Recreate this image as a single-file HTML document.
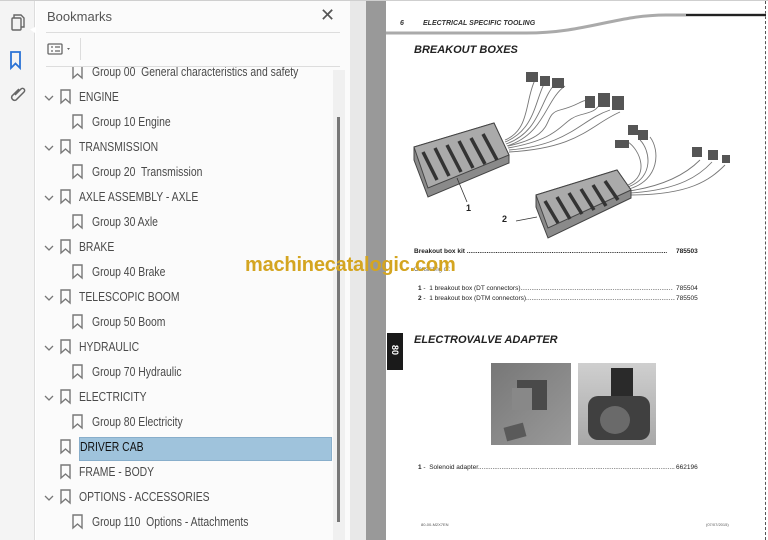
<!DOCTYPE html>
<html><head><meta charset="utf-8"><style>
*{margin:0;padding:0;box-sizing:border-box}
body{width:768px;height:540px;overflow:hidden;position:relative;background:#fff;font-family:"Liberation Sans",sans-serif}
.abs{position:absolute}
.it{position:absolute;font-size:13px;color:#4a4a4a;white-space:nowrap;line-height:14px;transform:scaleX(0.8);transform-origin:0 0}
.doc{position:absolute;font-family:"Liberation Sans",sans-serif;color:#222;white-space:nowrap}
</style></head><body>
<div class="abs" style="left:0;top:0;width:768px;height:1px;background:#cfcfcf"></div>
<div class="abs" style="left:0;top:1px;width:35px;height:539px;background:#f4f4f4;border-right:1px solid #ddd"></div>
<svg class="abs" style="left:0;top:0" width="36" height="110">
 <g fill="none" stroke="#666" stroke-width="1.4">
  <rect x="12" y="18" width="9" height="12" rx="1"/>
  <path d="M14 18 V15 H21 L24 18 V27 H21"/>
 </g>
 <path d="M11 52 H20 V68 L15.5 63.5 L11 68 Z" fill="none" stroke="#2a72d5" stroke-width="1.8"/>
 <path d="M30 29.5 L35 27 L35 33 Z" fill="#fff"/>
 <path d="M19 89 L12 96 a3 3 0 0 0 4 4 L24 92 a2 2 0 0 0 -3 -3 L15 95" fill="none" stroke="#666" stroke-width="1.5"/>
</svg>
<div class="abs" style="left:36px;top:1px;width:314px;height:539px;background:#fbfbfb"></div>
<div class="abs" style="left:47px;top:9px;font-size:13px;color:#555">Bookmarks</div>
<div class="abs" style="left:320px;top:5px;font-size:18px;color:#555">✕</div>
<div class="abs" style="left:46px;top:32px;width:294px;height:1px;background:#ddd"></div>
<svg class="abs" style="left:46px;top:40px" width="40" height="20"><rect x="2" y="4" width="14" height="10" rx="1" fill="none" stroke="#666" stroke-width="1.3"/><path d="M5 7H7M9 7H14M5 11H7M9 11H14" stroke="#666" stroke-width="1.3"/><path d="M21 8L24 8L22.5 10Z" fill="#666"/></svg>
<div class="abs" style="left:80px;top:38px;width:1px;height:22px;background:#ddd"></div>
<div class="abs" style="left:46px;top:66px;width:294px;height:1px;background:#ddd"></div>
<div class="abs" style="left:333px;top:70px;width:12px;height:470px;background:#f0f0f0"></div>
<div class="abs" style="left:337px;top:117px;width:3px;height:405px;background:#777"></div>
<div class="abs" style="left:36px;top:67px;width:297px;height:473px;overflow:hidden">
<svg width="297" height="473" style="position:absolute;left:0;top:0">
<defs><path id="bm" d="M0 0H9V13L4.5 9L0 13Z" fill="none" stroke="#777" stroke-width="1.4"/><path id="ch" d="M0 0L4 4L8 0" fill="none" stroke="#777" stroke-width="1.3"/></defs>
<use href="#bm" x="37" y="-2"/>
<use href="#ch" x="9" y="29"/><use href="#bm" x="25" y="23"/>
<use href="#bm" x="37" y="48"/>
<use href="#ch" x="9" y="79"/><use href="#bm" x="25" y="73"/>
<use href="#bm" x="37" y="98"/>
<use href="#ch" x="9" y="129"/><use href="#bm" x="25" y="123"/>
<use href="#bm" x="37" y="148"/>
<use href="#ch" x="9" y="179"/><use href="#bm" x="25" y="173"/>
<use href="#bm" x="37" y="198"/>
<use href="#ch" x="9" y="229"/><use href="#bm" x="25" y="223"/>
<use href="#bm" x="37" y="248"/>
<use href="#ch" x="9" y="279"/><use href="#bm" x="25" y="273"/>
<use href="#bm" x="37" y="298"/>
<use href="#ch" x="9" y="329"/><use href="#bm" x="25" y="323"/>
<use href="#bm" x="37" y="348"/>
<use href="#bm" x="25" y="373"/>
<use href="#bm" x="25" y="398"/>
<use href="#ch" x="9" y="429"/><use href="#bm" x="25" y="423"/>
<use href="#bm" x="37" y="448"/>
</svg>
<div class="abs" style="left:43px;top:370px;width:253px;height:24px;background:#9fc3dc;border:1px solid #88aecb"></div>
</div>
<div class="it" style="left:92px;top:65px;clip-path:inset(2px 0 0 0)">Group 00&nbsp; General characteristics and safety</div>
<div class="it" style="left:79px;top:90px">ENGINE</div>
<div class="it" style="left:92px;top:115px">Group 10 Engine</div>
<div class="it" style="left:79px;top:140px">TRANSMISSION</div>
<div class="it" style="left:92px;top:165px">Group 20&nbsp; Transmission</div>
<div class="it" style="left:79px;top:190px">AXLE ASSEMBLY - AXLE</div>
<div class="it" style="left:92px;top:215px">Group 30 Axle</div>
<div class="it" style="left:79px;top:240px">BRAKE</div>
<div class="it" style="left:92px;top:265px">Group 40 Brake</div>
<div class="it" style="left:79px;top:290px">TELESCOPIC BOOM</div>
<div class="it" style="left:92px;top:315px">Group 50 Boom</div>
<div class="it" style="left:79px;top:340px">HYDRAULIC</div>
<div class="it" style="left:92px;top:365px">Group 70 Hydraulic</div>
<div class="it" style="left:79px;top:390px">ELECTRICITY</div>
<div class="it" style="left:92px;top:415px">Group 80 Electricity</div>
<div class="it" style="left:80px;top:440px;color:#111">DRIVER CAB</div>
<div class="it" style="left:79px;top:465px">FRAME - BODY</div>
<div class="it" style="left:79px;top:490px">OPTIONS - ACCESSORIES</div>
<div class="it" style="left:92px;top:515px">Group 110&nbsp; Options - Attachments</div>
<div class="abs" style="left:350px;top:1px;width:16px;height:539px;background:#e8e8e8"></div>
<div class="abs" style="left:366px;top:1px;width:20px;height:539px;background:#999"></div>
<div class="abs" style="left:386px;top:1px;width:382px;height:539px;background:#fff"></div>
<div class="abs" style="left:765px;top:1px;width:0;height:539px;border-left:1px dashed #555"></div>
<svg class="abs" style="left:386px;top:0" width="380" height="40"><path d="M0 33 H140 C200 33 230 15 280 15 H380" fill="none" stroke="#aaa" stroke-width="3"/><path d="M300 15 H380" stroke="#222" stroke-width="2"/></svg>
<div class="doc" style="left:400px;top:20px;font-size:7px;font-weight:bold;font-style:italic;color:#333">6</div>
<div class="doc" style="left:423px;top:20px;font-size:7px;font-weight:bold;font-style:italic;color:#333">ELECTRICAL SPECIFIC TOOLING</div>
<div class="doc" style="left:414px;top:44px;font-size:11px;font-weight:bold;font-style:italic">BREAKOUT BOXES</div>
<svg class="abs" style="left:0;top:0" width="768" height="260">
 <g fill="none" stroke="#777" stroke-width="0.9">
  <path d="M505 140 C530 130 525 100 535 80"/><path d="M505 142 C535 130 535 100 545 82"/>
  <path d="M506 144 C540 132 540 100 555 84"/><path d="M507 146 C545 134 545 100 565 86"/>
  <path d="M508 146 C560 135 540 115 560 110 C580 105 580 100 590 100"/>
  <path d="M508 148 C565 138 560 120 580 115 C600 110 595 108 600 105"/>
  <path d="M509 150 C570 145 580 120 610 110"/><path d="M509 152 C580 148 590 125 620 112"/>
  <path d="M628 185 C650 175 640 150 628 142"/><path d="M628 187 C655 177 650 150 640 140"/>
  <path d="M629 189 C660 180 660 150 650 137"/><path d="M629 191 C670 185 690 170 700 160"/>
  <path d="M630 193 C680 190 700 175 712 162"/><path d="M630 195 C690 195 710 180 725 165"/>
 </g>
 <g fill="#555">
  <rect x="526" y="72" width="12" height="10"/><rect x="540" y="76" width="10" height="10"/><rect x="552" y="78" width="12" height="10"/>
  <rect x="585" y="96" width="10" height="12"/><rect x="598" y="93" width="12" height="14"/><rect x="612" y="96" width="12" height="14"/>
  <rect x="628" y="125" width="10" height="10"/><rect x="615" y="140" width="14" height="8"/><rect x="638" y="130" width="10" height="10"/>
  <rect x="692" y="147" width="10" height="10"/><rect x="708" y="150" width="10" height="10"/><rect x="722" y="155" width="8" height="8"/>
 </g>
 <path d="M414 147 L494 123 L509 155 L509 163 L428 197 L414 160 Z" fill="#8a8a8a" stroke="#444"/>
 <path d="M414 147 L494 123 L509 155 L428 188 Z" fill="#aaa" stroke="#444"/>
 <g stroke="#333" stroke-width="3.5"><path d="M423 152L437 180M435 148L449 176M447 145L461 172M459 141L473 168M471 138L485 164M483 134L497 160"/></g>
 <path d="M536 195 L617 170 L631 190 L631 198 L548 238 L536 207 Z" fill="#8a8a8a" stroke="#444"/>
 <path d="M536 195 L617 170 L631 190 L548 228 Z" fill="#aaa" stroke="#444"/>
 <g stroke="#333" stroke-width="3.5"><path d="M545 201L558 223M557 197L570 219M569 193L582 214M581 189L594 210M593 185L606 206M605 181L618 200"/></g>
 <path d="M457 178 L467 202" stroke="#333" stroke-width="0.8"/><path d="M516 221 L537 217" stroke="#333" stroke-width="0.8"/>
</svg>
<div class="doc" style="left:466px;top:203px;font-size:9px;font-weight:bold">1</div>
<div class="doc" style="left:502px;top:214px;font-size:9px;font-weight:bold">2</div>
<div class="doc" style="left:414px;top:248px;font-size:6.5px;font-weight:bold;width:260px;overflow:hidden">Breakout box kit ...............................................................................................................</div>
<div class="doc" style="left:676px;top:248px;font-size:6.5px;font-weight:bold;background:#fff">785503</div>
<div class="doc" style="left:414px;top:267px;font-size:6px;color:#555">Consisting of:</div>
<div class="doc" style="left:418px;top:285px;font-size:6.5px;width:255px;overflow:hidden"><b>1</b> - &nbsp;1 breakout box (DT connectors)...............................................................................................</div>
<div class="doc" style="left:676px;top:285px;font-size:6.5px">785504</div>
<div class="doc" style="left:418px;top:295px;font-size:6.5px;width:257px;overflow:hidden"><b>2</b> - &nbsp;1 breakout box (DTM connectors)..............................................................................................</div>
<div class="doc" style="left:676px;top:295px;font-size:6.5px">785505</div>
<div class="abs" style="left:387px;top:333px;width:16px;height:37px;background:#1a1a1a"></div>
<div class="doc" style="left:387px;top:345px;width:16px;font-size:9px;font-weight:bold;color:#fff;transform:rotate(90deg);text-align:center">80</div>
<div class="doc" style="left:414px;top:334px;font-size:11px;font-weight:bold;font-style:italic">ELECTROVALVE ADAPTER</div>
<div class="abs" style="left:491px;top:363px;width:80px;height:82px;background:linear-gradient(135deg,#777,#9a9a9a)"></div>
<div class="abs" style="left:517px;top:380px;width:30px;height:30px;background:#4a4a4a"></div>
<div class="abs" style="left:512px;top:388px;width:20px;height:22px;background:#888"></div>
<div class="abs" style="left:505px;top:425px;width:20px;height:14px;background:#5a5a5a;transform:rotate(-15deg)"></div>
<div class="abs" style="left:578px;top:363px;width:78px;height:82px;background:linear-gradient(180deg,#cfcfcf,#a8a8a8)"></div>
<div class="abs" style="left:611px;top:368px;width:22px;height:28px;background:#2a2a2a"></div>
<div class="abs" style="left:588px;top:396px;width:62px;height:44px;background:#404040;border-radius:10px"></div>
<div class="abs" style="left:600px;top:406px;width:30px;height:28px;background:#6a6a6a;border-radius:50%"></div>
<div class="doc" style="left:418px;top:464px;font-size:6.5px;width:257px;overflow:hidden"><b>1</b> - &nbsp;Solenoid adapter...........................................................................................................................................</div>
<div class="doc" style="left:676px;top:464px;font-size:6.5px">662196</div>
<div class="doc" style="left:421px;top:522px;font-size:4px;color:#555">80-00-M2X7EN</div>
<div class="doc" style="left:706px;top:522px;font-size:4px;color:#555">(07/07/2015)</div>
<div class="abs" style="left:245px;top:254px;font-size:20px;font-weight:bold;color:#d4a521;white-space:nowrap;letter-spacing:-0.2px">machinecatalogic.com</div>
</body></html>
